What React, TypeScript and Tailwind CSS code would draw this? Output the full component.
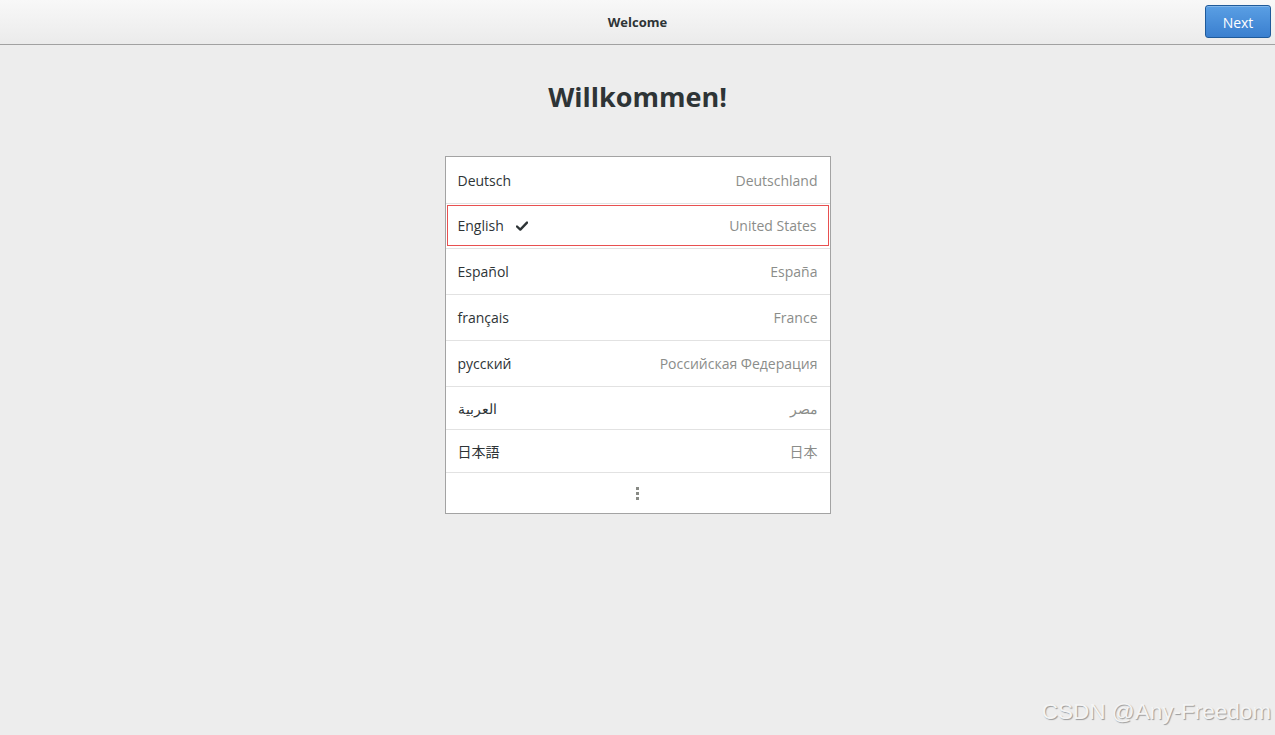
import React from "react";

const rows: { lang: string; region: string; h: string; selected?: boolean }[] = [
  { lang: "Deutsch", region: "Deutschland", h: "h-[47px]" },
  { lang: "English", region: "United States", h: "h-[45px]", selected: true },
  { lang: "Español", region: "España", h: "h-[46px]" },
  { lang: "français", region: "France", h: "h-[46px]" },
  { lang: "русский", region: "Российская Федерация", h: "h-[46px]" },
  { lang: "العربية", region: "مصر", h: "h-[43px]" },
  { lang: "日本語", region: "日本", h: "h-[43px]" },
];

function Check() {
  return (
    <svg width="12" height="10" viewBox="0 0 12 10" className="ml-[12px]">
      <path d="M1 5.5 L4.3 8.6 L11 1.6" fill="none" stroke="#2e3436" strokeWidth="2.4" strokeLinecap="round" strokeLinejoin="round" />
    </svg>
  );
}

export default function App() {
  return (
    <div
      className="relative flex h-[735px] w-full flex-col bg-[#ededed] text-[#2e3436]"
      style={{ fontFamily: '"Open Sans", "Noto Sans", "Noto Sans CJK JP", sans-serif' }}
    >
      <header className="relative flex h-[45px] shrink-0 items-center justify-center border-b border-[#a1a1a1] bg-gradient-to-b from-[#f8f8f8] to-[#ebebeb] pt-[2px]">
        <span className="text-[13px] font-bold text-[#2e3436]">Welcome</span>
        <button className="absolute right-[4px] top-[5px] flex h-[33px] w-[66px] items-center justify-center rounded-[3px] border border-[#1f5a9a] bg-gradient-to-b from-[#5a9fe4] to-[#3a7fcf] pt-[1px] text-[14px] text-white shadow-[inset_0_1px_0_rgba(255,255,255,0.25)]">
          Next
        </button>
      </header>

      <main className="flex flex-col items-center">
        <h1 className="mt-[34px] text-[27px] font-bold leading-[36px] text-[#2e3436]">Willkommen!</h1>

        <div className="mt-[41px] flex w-[386px] flex-col border border-[#a3a3a3] bg-white">
          {rows.map((r, i) => (
            <div
              key={i}
              className={`${r.h} ${
                r.selected ? "p-[1px] pb-[2px] border-b border-[#e2e2e2]" : "border-b border-[#e2e2e2]"
              }`}
            >
              <div
                className={`flex h-full items-center justify-between text-[14px] ${
                  r.selected ? "border border-[#e85050] pl-[10px] pr-[11px]" : "px-[12px]"
                }`}
              >
                <span className="flex items-center text-[#2e3436]">
                  {r.lang}
                  {r.selected && <Check />}
                </span>
                <span className="text-[#8b8d8a]">{r.region}</span>
              </div>
            </div>
          ))}
          <div className="flex h-[40px] items-center justify-center">
            <div className="flex flex-col gap-[2px]">
              <span className="h-[3px] w-[3px] bg-[#888a85]" />
              <span className="h-[3px] w-[3px] bg-[#888a85]" />
              <span className="h-[3px] w-[3px] bg-[#888a85]" />
            </div>
          </div>
        </div>
      </main>

      <div
        className="absolute bottom-[6px] right-[4px] text-[22.5px] text-[#f4f4f4]"
        style={{ fontFamily: '"Liberation Sans", Arial, sans-serif', textShadow: "1px 1px 1px #9a9a9a" }}
      >
        CSDN @Any-Freedom
      </div>
    </div>
  );
}
